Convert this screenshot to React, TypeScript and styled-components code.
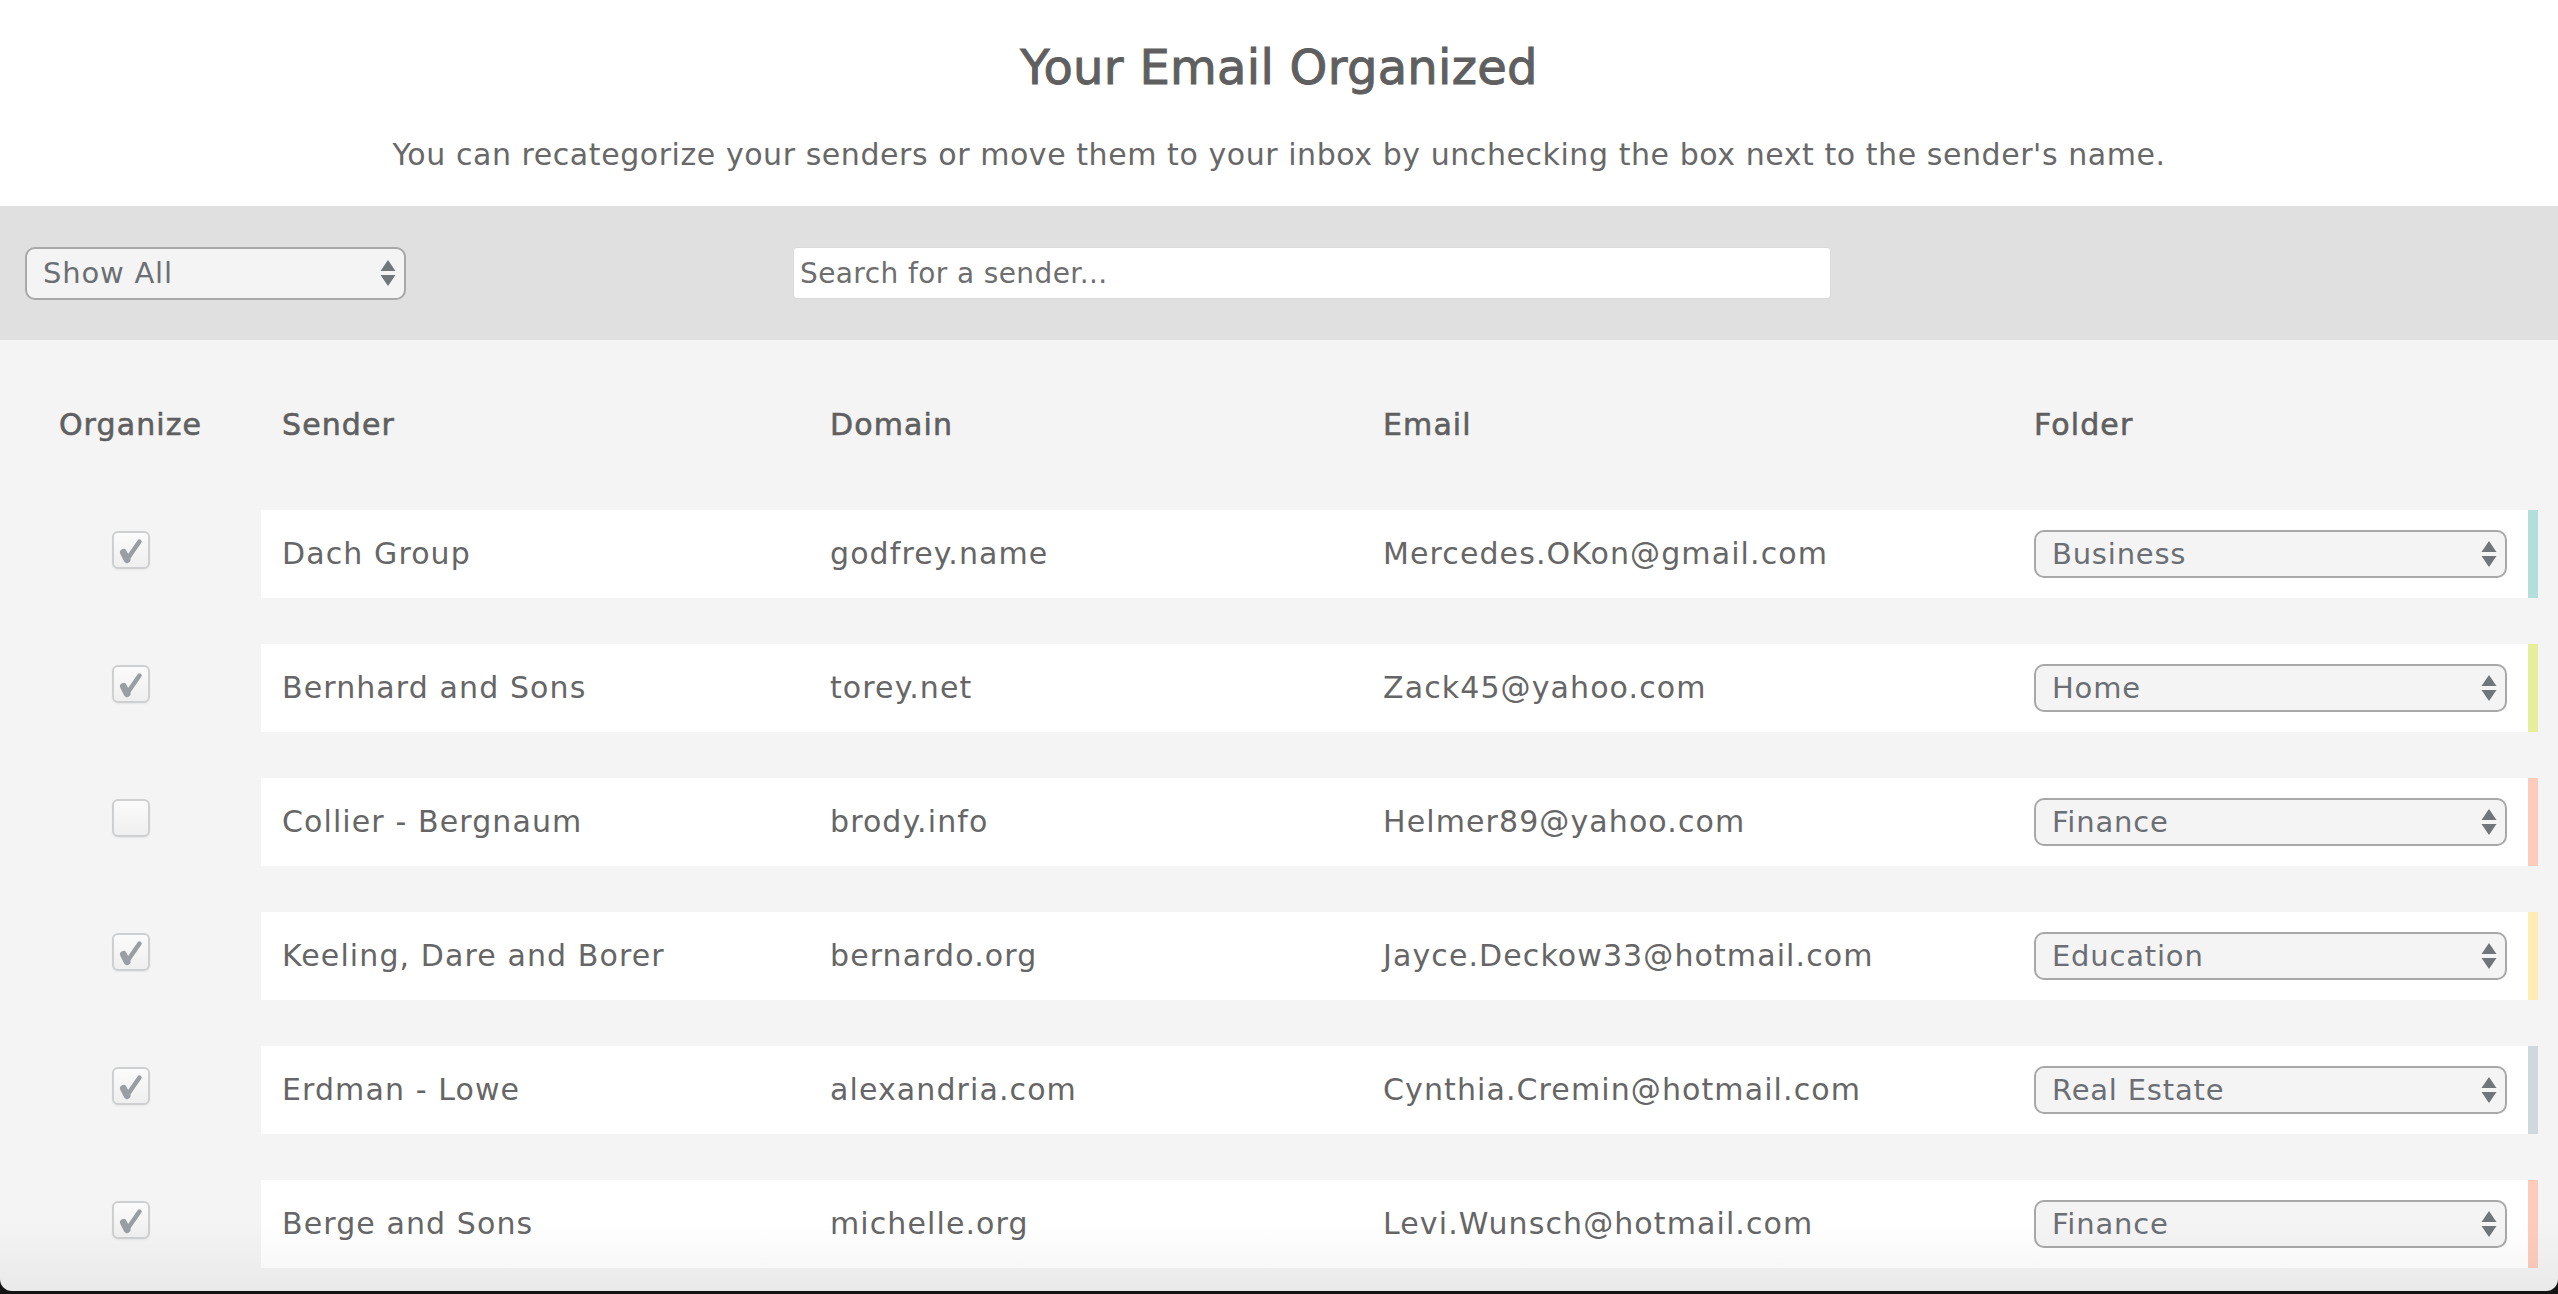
import React from "react";
import styled, { createGlobalStyle } from "styled-components";

const Global = createGlobalStyle`
  html, body { margin: 0; padding: 0; background: #141414; }
  body { font-family: "DejaVu Sans", "Noto Sans", sans-serif; color: #666; }
  * { box-sizing: border-box; }
`;

const Window = styled.div`
  position: relative;
  width: 2558px;
  height: 1291px;
  background: #f4f4f4;
  border-radius: 0 0 12px 12px;
  overflow: hidden;
  &::after {
    content: "";
    position: absolute;
    left: 0;
    right: 0;
    bottom: 0;
    height: 70px;
    pointer-events: none;
    background: linear-gradient(to bottom, rgba(0, 0, 0, 0), rgba(0, 0, 0, 0.045));
  }
`;

const Intro = styled.header`
  height: 206px;
  background: #fff;
  padding-top: 39px;
  text-align: center;
`;

const Title = styled.h1`
  margin: 0;
  font-size: 48px;
  line-height: 56px;
  font-weight: 400;
  letter-spacing: 0.3px;
  color: #5f5f5f;
  -webkit-text-stroke: 1px #5f5f5f;
`;

const Subtitle = styled.p`
  margin: 42px 0 0;
  font-size: 30px;
  line-height: 36px;
  color: #686868;
  letter-spacing: 0.56px;
`;

const Toolbar = styled.div`
  height: 134px;
  background: #e0e0e0;
  display: flex;
  align-items: center;
  padding-left: 25px;
  gap: 388px;
`;

const SelectWrap = styled.div<{ $w: number; $h: number }>`
  position: relative;
  width: ${(p) => p.$w}px;
  height: ${(p) => p.$h}px;
`;

const NativeSelect = styled.select`
  appearance: none;
  -webkit-appearance: none;
  width: 100%;
  height: 100%;
  background: #f4f4f4;
  border: 2px solid #a8a8a8;
  border-radius: 10px;
  padding: 0 40px 0 16px;
  font-family: "DejaVu Sans", sans-serif;
  font-size: 29px;
  letter-spacing: 0.8px;
  color: #6b6f73;
  outline: none;
`;

const Arrows = styled.svg`
  position: absolute;
  right: 9px;
  top: 50%;
  transform: translateY(-50%);
  pointer-events: none;
`;

const Search = styled.input`
  width: 1036px;
  height: 50px;
  border: none;
  border-radius: 3px;
  background: #fff;
  padding: 0 6px;
  font-family: "DejaVu Sans", sans-serif;
  font-size: 28px;
  letter-spacing: 0.4px;
  color: #666;
  box-shadow: 0 0 0 1px #dadada;
  outline: none;
  &::placeholder { color: #6e6e6e; }
`;

const Table = styled.section`
  padding: 0 20px;
  display: flex;
  flex-direction: column;
`;

const Line = styled.div<{ $head?: boolean }>`
  display: flex;
  align-items: stretch;
  gap: 20px;
  height: ${(p) => (p.$head ? 170 : 88)}px;
  margin-bottom: ${(p) => (p.$head ? 0 : 46)}px;
`;

const OrganizeCell = styled.div`
  width: 221px;
  flex: none;
  display: flex;
  align-items: center;
  justify-content: center;
`;

const Cells = styled.div<{ $head?: boolean }>`
  flex: 1;
  display: grid;
  grid-template-columns: 548px 553px 651px 473px;
  align-items: center;
  padding: 0 21px;
  background: ${(p) => (p.$head ? "transparent" : "#fff")};
`;

const HeadLabel = styled.span`
  font-size: 30px;
  line-height: 34px;
  letter-spacing: 1.1px;
  color: #5f5f5f;
  -webkit-text-stroke: 0.6px #5f5f5f;
`;

const Text = styled.span`
  font-size: 30px;
  line-height: 34px;
  letter-spacing: 1.1px;
  color: #666;
  white-space: nowrap;
`;

const Stripe = styled.div<{ $c: string }>`
  width: 10px;
  flex: none;
  margin-left: -20px;
  background: ${(p) => p.$c};
`;

const Box = styled.span`
  width: 38px;
  height: 38px;
  margin-bottom: 8px;
  border: 2px solid #cdcfd0;
  border-radius: 6px;
  background: linear-gradient(to bottom, #fbfbfb, #efefef);
  box-shadow: 0 1px 2px rgba(0, 0, 0, 0.06);
  display: flex;
  align-items: center;
  justify-content: center;
`;

type Row = {
  on: boolean;
  sender: string;
  domain: string;
  email: string;
  folder: string;
  color: string;
};

const rows: Row[] = [
  { on: true, sender: "Dach Group", domain: "godfrey.name", email: "Mercedes.OKon@gmail.com", folder: "Business", color: "#b2dfdb" },
  { on: true, sender: "Bernhard and Sons", domain: "torey.net", email: "Zack45@yahoo.com", folder: "Home", color: "#e6ee9c" },
  { on: false, sender: "Collier - Bergnaum", domain: "brody.info", email: "Helmer89@yahoo.com", folder: "Finance", color: "#ffccbc" },
  { on: true, sender: "Keeling, Dare and Borer", domain: "bernardo.org", email: "Jayce.Deckow33@hotmail.com", folder: "Education", color: "#ffecb3" },
  { on: true, sender: "Erdman - Lowe", domain: "alexandria.com", email: "Cynthia.Cremin@hotmail.com", folder: "Real Estate", color: "#cfd8dc" },
  { on: true, sender: "Berge and Sons", domain: "michelle.org", email: "Levi.Wunsch@hotmail.com", folder: "Finance", color: "#ffccbc" },
];

const folders = ["Business", "Home", "Finance", "Education", "Real Estate"];

const ArrowIcon = () => (
  <Arrows width="18" height="30" viewBox="0 0 18 30">
    <path d="M9 2 L16.5 13 L1.5 13 Z" fill="#71767b" />
    <path d="M1.5 17 L16.5 17 L9 28 Z" fill="#71767b" />
  </Arrows>
);

const Check = () => (
  <svg width="34" height="34" viewBox="0 0 34 34">
    <path d="M9.5 19.5 L13 26.5" stroke="#9a9ea3" strokeWidth="7" strokeLinecap="round" fill="none" />
    <path d="M13 26.5 L25.5 8.5" stroke="#9a9ea3" strokeWidth="4.5" strokeLinecap="round" fill="none" />
  </svg>
);

const Select = ({ value, options, w, h }: { value: string; options: string[]; w: number; h: number }) => (
  <SelectWrap $w={w} $h={h}>
    <NativeSelect defaultValue={value}>
      {options.map((o) => (
        <option key={o}>{o}</option>
      ))}
    </NativeSelect>
    <ArrowIcon />
  </SelectWrap>
);

export default function App() {
  return (
    <>
      <Global />
      <Window>
        <Intro>
          <Title>Your Email Organized</Title>
          <Subtitle>
            You can recategorize your senders or move them to your inbox by unchecking the box next to the sender's name.
          </Subtitle>
        </Intro>
        <Toolbar>
          <Select value="Show All" options={["Show All", ...folders]} w={381} h={53} />
          <Search placeholder="Search for a sender..." />
        </Toolbar>
        <Table>
          <Line $head>
            <OrganizeCell>
              <HeadLabel>Organize</HeadLabel>
            </OrganizeCell>
            <Cells $head>
              <HeadLabel>Sender</HeadLabel>
              <HeadLabel>Domain</HeadLabel>
              <HeadLabel>Email</HeadLabel>
              <HeadLabel>Folder</HeadLabel>
            </Cells>
          </Line>
          {rows.map((r) => (
            <Line key={r.sender}>
              <OrganizeCell>
                <Box>{r.on ? <Check /> : null}</Box>
              </OrganizeCell>
              <Cells>
                <Text>{r.sender}</Text>
                <Text>{r.domain}</Text>
                <Text>{r.email}</Text>
                <Select value={r.folder} options={folders} w={473} h={48} />
              </Cells>
              <Stripe $c={r.color} />
            </Line>
          ))}
        </Table>
      </Window>
    </>
  );
}
